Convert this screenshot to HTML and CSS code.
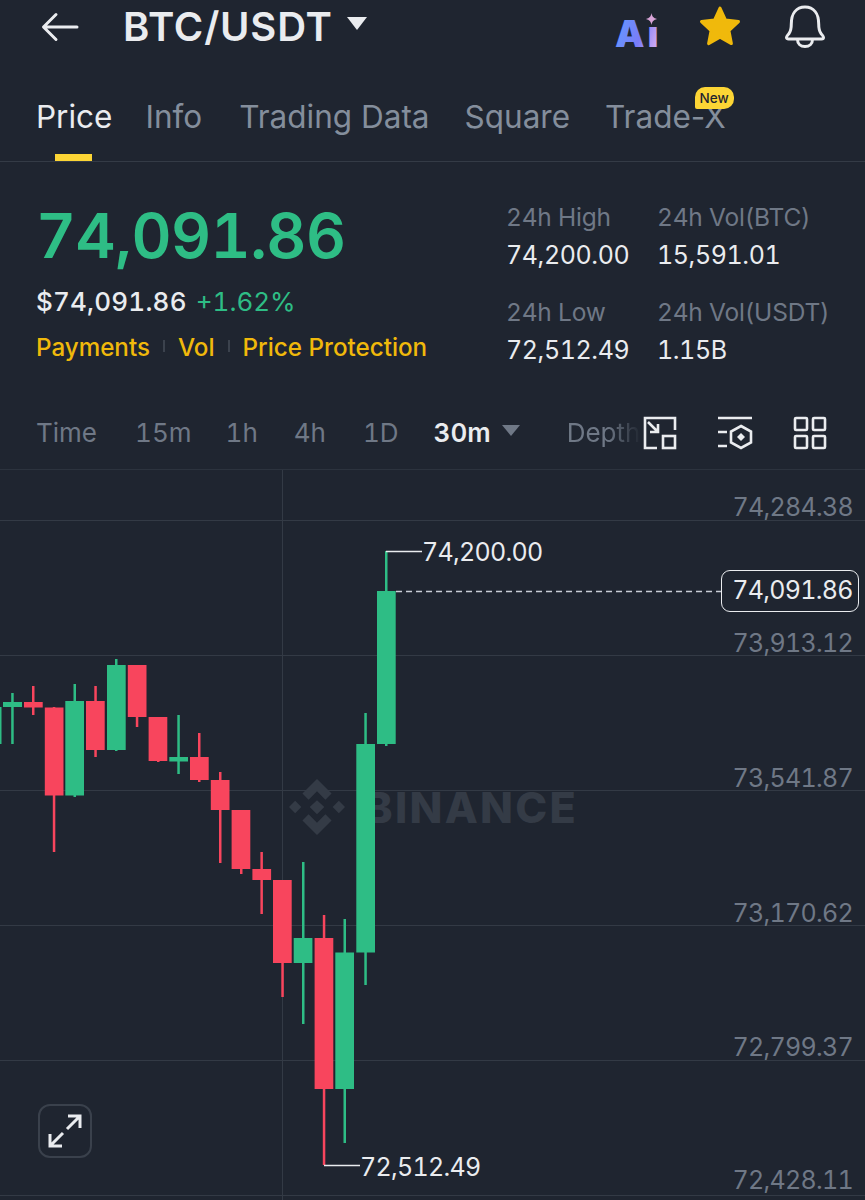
FILE: index.html
```html
<!DOCTYPE html>
<html lang="en">
<head>
<meta charset="utf-8">
<title>BTC/USDT</title>
<link rel="stylesheet" href="styles.css">
</head>
<body>
<div class="app">
  <header class="topbar">
    <svg class="back" width="38" height="30" viewBox="0 0 38 30"><path d="M36 15H3M15 2.500 2.500 15 15 27.500" fill="none" stroke="#eaecef" stroke-width="3" stroke-linecap="round" stroke-linejoin="round"/></svg>
    <h1 class="pair">BTC/USDT</h1>
    <span class="pair-caret"></span>
    <div class="top-icons">
      <svg class="ai" width="50" height="38" viewBox="0 0 50 38">
        <defs><linearGradient id="aig" x1="0" y1="0" x2="1" y2="0.300"><stop offset="0" stop-color="#5f9dff"/><stop offset="0.650" stop-color="#7a7cf8"/><stop offset="1" stop-color="#c9a6f2"/></linearGradient></defs>
        <text x="1" y="35" class="ai-text" fill="url(#aig)">A&#305;</text>
        <path d="M37.500 1c.6 3.500 2 5 5.500 6-3.500 1-4.900 2.500-5.500 6-.6-3.500-2-5-5.500-6 3.500-1 4.900-2.500 5.500-6z" fill="#d9a5d8"/>
      </svg>
      <svg class="star" width="44" height="42" viewBox="0 0 44 42"><path d="M22 3l5.500 12 13 1.600-9.600 9 2.500 13L22 32.300 10.600 38.600l2.500-13-9.600-9 13-1.600z" fill="#f0b90b" stroke="#f0b90b" stroke-width="3" stroke-linejoin="round"/></svg>
      <svg class="bell" width="42" height="44" viewBox="0 0 42 44"><path d="M2.500 33.500c0-1.500 1.300-2.300 2.600-4.200 1.700-2.400 2.200-5 2.200-9.300 0-10.500 5-17 13.700-17s13.700 6.500 13.700 17c0 4.300.5 6.900 2.200 9.300 1.300 1.900 2.600 2.700 2.600 4.200 0 1-.7 1.500-2 1.500H4.500c-1.300 0-2-.5-2-1.500zM13.500 35.500c0 4.500 3.200 7 7.500 7s7.500-2.500 7.500-7" fill="none" stroke="#eaecef" stroke-width="3" stroke-linejoin="round"/></svg>
    </div>
  </header>

  <nav class="tabs">
    <a class="tab tab-active">Price</a>
    <a class="tab tab-info">Info</a>
    <a class="tab">Trading Data</a>
    <a class="tab">Square</a>
    <a class="tab tab-new">Trade-X<span class="badge">New</span></a>
  </nav>

  <section class="stats">
    <div class="price-col">
      <div class="last-price">74,091.86</div>
      <div class="fiat-row"><span class="fiat">$74,091.86</span><span class="change">+1.62%</span></div>
      <div class="links"><span>Payments</span><i class="sep"></i><span>Vol</span><i class="sep"></i><span>Price Protection</span></div>
    </div>
    <dl class="facts">
      <div class="fact fact-a"><dt>24h High</dt><dd>74,200.00</dd></div>
      <div class="fact"><dt>24h Vol(BTC)</dt><dd>15,591.01</dd></div>
      <div class="fact fact-a"><dt>24h Low</dt><dd>72,512.49</dd></div>
      <div class="fact"><dt>24h Vol(USDT)</dt><dd>1.15B</dd></div>
    </dl>
  </section>

  <div class="toolbar">
    <span class="iv iv-time">Time</span>
    <span class="iv iv-15">15m</span>
    <span class="iv iv-1h">1h</span>
    <span class="iv iv-4h">4h</span>
    <span class="iv iv-1d">1D</span>
    <span class="iv iv-on">30m</span>
    <span class="iv-caret"></span>
    <span class="iv iv-depth">Depth</span>
    <div class="tool-icons">
      <svg width="34" height="34" viewBox="0 0 34 34" fill="none" stroke="#eaecef" stroke-width="2.600"><path d="M32 14V2H2v30h12"/><rect x="20" y="20" width="12" height="12"/><path d="M5 6l10 10M15 8v8H7"/></svg>
      <svg width="36" height="34" viewBox="0 0 36 34" fill="none" stroke="#eaecef" stroke-width="2.600"><path d="M1 2h34M1 16h9M1 30h9"/><path d="M24 10l10 5.500v11L24 32l-10-5.500v-11z"/><path d="M24 17l4 4-4 4-4-4z" fill="#eaecef" stroke="none"/></svg>
      <svg width="34" height="34" viewBox="0 0 34 34" fill="none" stroke="#eaecef" stroke-width="2.600"><rect x="2" y="2" width="12" height="12" rx="1"/><rect x="20" y="2" width="12" height="12" rx="1"/><rect x="2" y="20" width="12" height="12" rx="1"/><rect x="20" y="20" width="12" height="12" rx="1"/></svg>
    </div>
  </div>

  <div class="chart">
    <svg class="plot" width="865" height="730" viewBox="0 470 865 730">
      <g class="grid">
        <path d="M0 520.500H865M0 655.500H865M0 790.500H865M0 925.500H865M0 1060.500H865M0 1195.500H865M282.500 470V1200"/>
      </g>
      <g class="mark">
        <path transform="translate(317 807) scale(1.120) translate(-316 -805)" d="M316 780l13 13-5.500 5.500L316 791l-7.500 7.500L303 793zM296.500 799.500l5.500 5.500-5.500 5.500-5.500-5.500zM316 799l6.500 6-6.500 6.500-6.500-6.500zM335.500 799.500l5.500 5.500-5.500 5.500-5.500-5.500zM316 819l7.500-7.500 5.500 5.500-13 13-13-13 5.500-5.500z"/>
        <text x="364" y="823" class="mark-text">BINANCE</text>
      </g>
      <g class="up">
        <rect x="-1" y="707" width="2.500" height="37"/>
        <rect x="11.200" y="693" width="2.500" height="51"/><rect x="3" y="702" width="19" height="5"/>
        <rect x="73.500" y="684" width="2.500" height="113"/><rect x="65.300" y="701" width="18.700" height="94.500"/>
        <rect x="115" y="659" width="2.500" height="92"/><rect x="107" y="665" width="18.700" height="85"/>
        <rect x="177.300" y="715" width="2.500" height="59"/><rect x="169.300" y="757" width="18.700" height="4.500"/>
        <rect x="302" y="862" width="2.500" height="162"/><rect x="293.700" y="938" width="18.700" height="25"/>
        <rect x="343.500" y="919" width="2.500" height="224"/><rect x="335.300" y="952.500" width="18.700" height="136.500"/>
        <rect x="364.300" y="713" width="2.500" height="272"/><rect x="356.300" y="744" width="18.700" height="208.500"/>
        <rect x="385" y="551" width="2.500" height="195"/><rect x="377" y="591" width="18.700" height="153"/>
      </g>
      <g class="down">
        <rect x="32" y="686" width="2.500" height="29"/><rect x="24" y="702" width="18.700" height="5.500"/>
        <rect x="52.800" y="707" width="2.500" height="145"/><rect x="44.800" y="707.500" width="18.700" height="88"/>
        <rect x="94.300" y="686" width="2.500" height="71"/><rect x="86" y="701" width="18.700" height="49"/>
        <rect x="135.800" y="665" width="2.500" height="62"/><rect x="127.800" y="665" width="18.700" height="52"/>
        <rect x="157" y="717" width="2.500" height="45"/><rect x="148.600" y="717" width="18.700" height="44"/>
        <rect x="198" y="733" width="2.500" height="49"/><rect x="190" y="757" width="18.700" height="23"/>
        <rect x="219" y="772" width="2.500" height="91"/><rect x="210.800" y="780" width="18.700" height="30"/>
        <rect x="240" y="810" width="2.500" height="64"/><rect x="231.600" y="810" width="18.700" height="59"/>
        <rect x="260.400" y="852" width="2.500" height="62"/><rect x="252.400" y="869" width="18.700" height="11"/>
        <rect x="281.300" y="880" width="2.500" height="117"/><rect x="273" y="880" width="18.700" height="83"/>
        <rect x="322.800" y="915" width="2.500" height="250"/><rect x="314.600" y="938" width="18.700" height="151"/>
      </g>
      <path class="leader" d="M386 551.500H422M324 1165.500H360"/>
      <path class="last-line" d="M396 591.500H721"/>
    </svg>

    <span class="hl hl-high">74,200.00</span>
    <span class="hl hl-low">72,512.49</span>
    <span class="axis ax-1">74,284.38</span>
    <span class="axis ax-2">73,913.12</span>
    <span class="axis ax-3">73,541.87</span>
    <span class="axis ax-4">73,170.62</span>
    <span class="axis ax-5">72,799.37</span>
    <span class="axis ax-6">72,428.11</span>
    <span class="last-tag">74,091.86</span>
    <button class="expand" aria-label="Expand">
      <svg width="36" height="36" viewBox="0 0 36 36" fill="none" stroke="#eaecef" stroke-width="3"><path d="M20 16 33 3M21 3h12v12M16 20 3 33M3 21v12h12"/></svg>
    </button>
  </div>
</div>
</body>
</html>
```
FILE: styles.css
```css
* { box-sizing: border-box; }
html, body { margin: 0; padding: 0; }
body {
  background: #1f2530;
  font-family: Inter, "Liberation Sans", sans-serif;
  font-variant-numeric: tabular-nums;
  color: #eaecef;
  width: 865px;
  height: 1200px;
  overflow: hidden;
}
.app { width: 865px; height: 1200px; display: flex; flex-direction: column; }

.topbar { height: 56px; display: flex; align-items: center; padding-left: 41px; position: relative; }
.back { margin-top: -3px; }
.pair { margin: -3px 0 0 44px; font-size: 40px; font-weight: 600; letter-spacing: 0.8px; color: #eaecef; }
.pair-caret {
  margin: -9px 0 0 14px;
  border-left: 10.500px solid transparent;
  border-right: 10.500px solid transparent;
  border-top: 13px solid #eaecef;
}
.top-icons { margin-left: auto; padding-right: 39px; display: flex; align-items: flex-start; height: 56px; }
.ai { margin-top: 12px; }
.ai-text { font-family: Inter, sans-serif; font-size: 37px; font-weight: 900; letter-spacing: 3px; }
.star { margin: 5px 0 0 34px; }
.bell { margin: 4px 0 0 42px; }

.tabs { height: 106px; padding: 0 0 0 36px; display: flex; gap: 35px; align-items: flex-start; border-bottom: 1.500px solid #343b46; font-variant-numeric: normal; }
.tab { font-size: 31.500px; line-height: 40px; margin-top: 41px; color: #848e9c; position: relative; }
.tab-active { color: #eaecef; margin-right: -2px; }
.tab-info { margin-right: 2px; }
.tab-active::after {
  content: "";
  position: absolute;
  left: 19px;
  top: 57px;
  width: 37px;
  height: 7px;
  background: #fcd535;
}
.badge {
  position: absolute;
  right: -8px;
  top: -10px;
  background: #fcd535;
  color: #1f2530;
  font-size: 13.500px;
  font-weight: 500;
  line-height: 22px;
  padding: 0 5px;
  border-radius: 10px 10px 10px 2px;
}

.stats { height: 220px; display: flex; padding: 0 0 0 36px; }
.price-col { width: 470px; }
.last-price { font-size: 62px; font-weight: 600; line-height: 76px; margin-top: 36px; color: #2ebd85; letter-spacing: -0.5px; }
.fiat-row { margin-top: 10px; font-size: 26px; line-height: 36px; display: flex; gap: 9px; }
.fiat { color: #eaecef; font-weight: 500; letter-spacing: 0.2px; }
.change { color: #2ebd85; }
.links { margin-top: 10px; font-size: 24.200px; line-height: 36px; color: #f0b90b; display: flex; align-items: center; gap: 13px; font-weight: 500; }
.sep { width: 2px; height: 12px; background: #3b424d; margin-top: -4px; }
.facts { margin: 36px 0 0; display: grid; grid-template-columns: 151px auto; grid-auto-rows: 95px; align-content: start; }
.fact dt { font-size: 24.500px; line-height: 38px; letter-spacing: -0.2px; color: #6f7886; }
.fact dd { margin: 1px 0 0; font-size: 25px; line-height: 36px; letter-spacing: -0.4px; color: #eaecef; }

.toolbar { height: 88px; display: flex; align-items: center; padding: 14px 0 0 36px; border-bottom: 1.500px solid #2c333e; font-size: 26px; color: #6f7886; }
.iv { line-height: 36px; }
.iv-15 { margin-left: 38px; }
.iv-1h { margin-left: 34px; }
.iv-4h { margin-left: 36px; }
.iv-1d { margin-left: 37px; }
.iv-on { margin-left: 35px; color: #eaecef; font-weight: 600; }
.iv-caret {
  margin-left: 11px;
  border-left: 9px solid transparent;
  border-right: 9px solid transparent;
  border-top: 11px solid #6f7886;
  margin-top: -4px;
}
.iv-depth {
  margin-left: 47px;
  width: 74px;
  overflow: hidden;
  white-space: nowrap;
  -webkit-mask-image: linear-gradient(to right, #000 55%, transparent 100%);
  mask-image: linear-gradient(to right, #000 55%, transparent 100%);
}
.tool-icons { margin-left: auto; padding-right: 38px; display: flex; gap: 40px; }

.chart { position: relative; flex: 1; overflow: hidden; }
.plot { position: absolute; left: 0; top: 0; display: block; }
.grid path { stroke: #333a45; stroke-width: 1; fill: none; }
.mark { fill: #343b46; }
.mark-text { font-family: Inter, sans-serif; font-size: 43px; font-weight: 800; letter-spacing: 2.300px; }
.up rect { fill: #2ebd85; }
.down rect { fill: #f8455d; }
.leader { stroke: #eaecef; stroke-width: 1.500; fill: none; }
.last-line { stroke: #c9ced6; stroke-width: 1.500; stroke-dasharray: 6 4; fill: none; }

.hl { position: absolute; font-size: 25px; line-height: 30px; letter-spacing: -0.7px; color: #eaecef; }
.hl-high { left: 422px; top: 67px; }
.hl-low { left: 360px; top: 682px; }
.axis { position: absolute; right: 12px; font-size: 25px; line-height: 30px; letter-spacing: -0.7px; color: #6f7886; }
.ax-1 { top: 22px; }
.ax-2 { top: 158px; }
.ax-3 { top: 293px; }
.ax-4 { top: 428px; }
.ax-5 { top: 562px; }
.ax-6 { top: 695px; }
.last-tag {
  position: absolute;
  left: 721px;
  top: 100px;
  width: 138px;
  height: 42px;
  padding-left: 5px;
  border: 1.500px solid #eaecef;
  border-radius: 9px;
  background: #1f2530;
  font-size: 25px;
  line-height: 39px;
  letter-spacing: -0.7px;
  text-align: center;
  color: #eaecef;
}
.expand {
  position: absolute;
  left: 38px;
  top: 634px;
  width: 54px;
  height: 54px;
  padding: 0;
  border: 2px solid #3a414c;
  border-radius: 12px;
  background: transparent;
  display: flex;
  align-items: center;
  justify-content: center;
}
```
